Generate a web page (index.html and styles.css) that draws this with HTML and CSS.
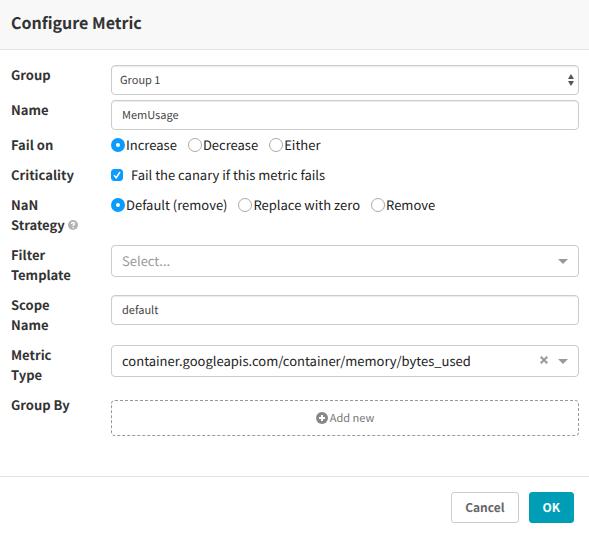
FILE: index.html
```html
<!DOCTYPE html>
<html lang="en">
<head>
<meta charset="utf-8">
<meta name="viewport" content="width=device-width, initial-scale=1">
<title>Configure Metric</title>
<link rel="stylesheet" href="styles.css">
</head>
<body>
<form class="modal">
  <header class="modal-header">
    <h1 class="modal-title">Configure Metric</h1>
  </header>
  <div class="modal-body">
    <div class="row">
      <label class="row-label" for="group">Group</label>
      <div class="field">
        <select class="input input-select" id="group">
          <option>Group 1</option>
        </select>
        <svg class="stepper" viewBox="0 0 6 12" aria-hidden="true"><path d="M3 0l3 5H0zM3 12l3-5H0z"/></svg>
      </div>
    </div>
    <div class="row">
      <label class="row-label" for="name">Name</label>
      <div class="field"><input class="input" id="name" type="text" value="MemUsage"></div>
    </div>
    <div class="row" role="radiogroup" aria-labelledby="fail-on">
      <span class="row-label" id="fail-on">Fail on</span>
      <div class="choices">
        <label class="choice"><input class="radio" type="radio" name="direction" checked>Increase</label>
        <label class="choice"><input class="radio" type="radio" name="direction">Decrease</label>
        <label class="choice"><input class="radio" type="radio" name="direction">Either</label>
      </div>
    </div>
    <div class="row">
      <span class="row-label">Criticality</span>
      <div class="choices">
        <label class="choice choice-check">
          <span class="check">
            <input class="checkbox" type="checkbox" checked>
            <svg class="tick" viewBox="0 0 12 12" aria-hidden="true"><path d="M3 6.300l2.200 2.400L9 3"/></svg>
          </span>
          Fail the canary if this metric fails
        </label>
      </div>
    </div>
    <div class="row" role="radiogroup" aria-labelledby="nan">
      <span class="row-label" id="nan">NaN Strategy
        <svg class="help" viewBox="0 0 10 10" aria-hidden="true"><circle cx="5" cy="5" r="5"/><path d="M3.500 4c0-2 3-2 3-.2C6.500 4.900 5 4.800 5 6M5 7v1.200"/></svg></span>
      <div class="choices">
        <label class="choice"><input class="radio" type="radio" name="nan" checked>Default (remove)</label>
        <label class="choice"><input class="radio" type="radio" name="nan">Replace with zero</label>
        <label class="choice"><input class="radio" type="radio" name="nan">Remove</label>
      </div>
    </div>
    <div class="row">
      <label class="row-label" for="filter">Filter Template</label>
      <div class="field">
        <select class="picker picker-empty" id="filter">
          <option>Select...</option>
        </select>
        <svg class="caret" viewBox="0 0 10 5" aria-hidden="true"><path d="M0 0h10L5 5z"/></svg>
      </div>
    </div>
    <div class="row">
      <label class="row-label" for="scope">Scope Name</label>
      <div class="field"><input class="input" id="scope" type="text" value="default"></div>
    </div>
    <div class="row">
      <label class="row-label" for="metric">Metric<br>Type</label>
      <div class="field">
        <select class="picker" id="metric">
          <option>container.googleapis.com/container/memory/bytes_used</option>
        </select>
        <button class="clear" type="button" aria-label="Clear value">
          <svg class="clear-icon" viewBox="0 0 8 8" aria-hidden="true"><path d="M.7.700l6.600 6.600M7.300.7L.7 7.300"/></svg>
        </button>
        <svg class="caret" viewBox="0 0 10 5" aria-hidden="true"><path d="M0 0h10L5 5z"/></svg>
      </div>
    </div>
    <div class="row">
      <span class="row-label">Group By</span>
      <button class="add-new" type="button">
        <svg class="plus" viewBox="0 0 12 12" aria-hidden="true"><circle cx="6" cy="6" r="6"/><path d="M6 3v6M3 6h6"/></svg>
        Add new
      </button>
    </div>
  </div>
  <footer class="modal-footer">
    <button class="button" type="button">Cancel</button>
    <button class="button button-primary" type="submit">OK</button>
  </footer>
</form>
</body>
</html>
```
FILE: styles.css
```css
* {
  box-sizing: border-box;
}

body {
  margin: 0;
  background: #fff;
  color: #333;
  font: 13px/20px "Noto Sans CJK SC", "Noto Sans", sans-serif;
  text-rendering: geometricPrecision;
}

button,
input,
select {
  margin: 0;
  font: inherit;
  text-rendering: inherit;
}

.modal-header {
  padding: 10px 11px 15px;
  background: #f8f8f8;
  border-bottom: 1px solid #e2e2e2;
}

.modal-title {
  margin: 0;
  font-size: 16px;
  line-height: 24px;
  font-weight: 700;
}

.modal-body {
  display: flex;
  flex-direction: column;
  gap: 5px;
  padding: 15px 10px 40px 11px;
}

.row {
  display: grid;
  grid-template-columns: 75px 1fr;
  column-gap: 25px;
  align-items: start;
}

.row-label {
  padding-bottom: 5px;
  font-weight: 700;
}

.field {
  position: relative;
  display: flex;
}

.input,
.picker {
  width: 100%;
  border: 1px solid #ccc;
  border-radius: 4px;
  background: #fff;
  appearance: none;
}

.input {
  height: 30px;
  padding: 0 10px;
  color: #444;
  font-size: 11px;
  box-shadow: inset 0 1px 1px rgba(0, 0, 0, 0.08);
}

.input-select {
  padding: 0 8px;
}

.picker {
  height: 32px;
  padding: 0 50px 0 10px;
  color: #222;
}

.picker-empty {
  color: #999;
}

.stepper {
  position: absolute;
  top: 9px;
  right: 5px;
  width: 6px;
  height: 12px;
  fill: #555;
  pointer-events: none;
}

.caret {
  position: absolute;
  top: 14px;
  right: 11px;
  width: 10px;
  height: 5px;
  fill: #999;
  pointer-events: none;
}

.clear {
  position: absolute;
  top: 7px;
  right: 27px;
  display: grid;
  place-items: center;
  width: 16px;
  height: 16px;
  padding: 0;
  border: 0;
  background: none;
}

.clear-icon {
  width: 8px;
  height: 8px;
  fill: none;
  stroke: #999;
  stroke-width: 2;
}

.choices {
  display: flex;
  gap: 11px;
  color: #222;
}

.choice {
  display: flex;
  align-items: center;
  gap: 1px;
}

.choice-check {
  gap: 8px;
}

.radio {
  width: 14px;
  height: 14px;
  border: 1px solid #aaa;
  border-radius: 50%;
  background: #fff;
  appearance: none;
}

.radio:checked {
  border: 5px solid #0a9bff;
}

.check {
  position: relative;
  display: flex;
}

.checkbox {
  width: 12px;
  height: 12px;
  border: 1px solid #aaa;
  border-radius: 3px;
  appearance: none;
}

.checkbox:checked {
  border-color: #0a9bff;
  background: #0a9bff;
}

.tick {
  position: absolute;
  inset: 0;
  fill: none;
  stroke: #fff;
  stroke-width: 1.5;
  pointer-events: none;
}

.help {
  width: 10px;
  height: 10px;
  fill: #b3b3b3;
}

.help path {
  fill: none;
  stroke: #fff;
  stroke-width: 1.4;
}

.add-new {
  display: flex;
  align-items: center;
  justify-content: center;
  gap: 2px;
  height: 36px;
  margin-top: 5px;
  border: 1px dashed #999;
  border-radius: 4px;
  background: none;
  color: #777;
  font-size: 11px;
}

.plus {
  width: 12px;
  height: 12px;
  fill: #888;
}

.plus path {
  stroke: #fff;
  stroke-width: 2;
}

.modal-footer {
  display: flex;
  justify-content: flex-end;
  gap: 10px;
  padding: 15px;
  border-top: 1px solid #e2e2e2;
}

.button {
  height: 31px;
  padding: 0 13px;
  border: 1px solid #ccc;
  border-radius: 3px;
  background: #fff;
  color: #666;
  font-size: 12px;
  font-weight: 700;
}

.button-primary {
  border-color: #009eb6;
  background: #009eb6;
  color: #fff;
}
```
